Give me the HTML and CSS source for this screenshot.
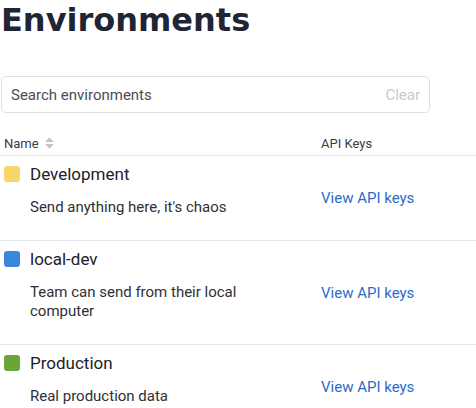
FILE: index.html
```html
<!DOCTYPE html>
<html>
<head>
<meta charset="utf-8">
<link rel="stylesheet" href="styles.css">
</head>
<body>
<div class="page">
  <h1 class="title">Environments</h1>
  <div class="search">
    <span class="search-placeholder">Search environments</span>
    <span class="search-clear">Clear</span>
  </div>
  <div class="table">
    <div class="thead">
      <div class="col-name">Name
        <svg class="sort" width="11" height="12" viewBox="0 0 11 12"><path d="M5.5 0.5 L10 5 L1 5 Z" fill="#bcc3cd"/><path d="M1 7 L10 7 L5.5 11.5 Z" fill="#bcc3cd"/></svg>
      </div>
      <div class="col-keys">API Keys</div>
    </div>
    <div class="row">
      <div class="col-name">
        <div class="env-name"><span class="swatch swatch-yellow"></span>Development</div>
        <div class="env-desc">Send anything here, it's chaos</div>
      </div>
      <div class="col-keys"><a class="link">View API keys</a></div>
    </div>
    <div class="row">
      <div class="col-name">
        <div class="env-name"><span class="swatch swatch-blue"></span>local-dev</div>
        <div class="env-desc">Team can send from their local computer</div>
      </div>
      <div class="col-keys"><a class="link">View API keys</a></div>
    </div>
    <div class="row">
      <div class="col-name">
        <div class="env-name"><span class="swatch swatch-green"></span>Production</div>
        <div class="env-desc">Real production data</div>
      </div>
      <div class="col-keys"><a class="link">View API keys</a></div>
    </div>
  </div>
</div>
</body>
</html>
```
FILE: styles.css
```css
html, body {
  margin: 0;
  padding: 0;
  background: #ffffff;
  overflow: hidden;
}
body {
  font-family: Roboto, "Liberation Sans", sans-serif;
  color: #25272c;
}
.page {
  width: 476px;
}
.title {
  margin: 0;
  padding: 0 0 0 1px;
  font-family: "DejaVu Sans", sans-serif;
  font-weight: 700;
  font-size: 32px;
  line-height: 40px;
  height: 40px;
  color: #1f2534;
}
.search {
  margin: 36px 0 0 1px;
  width: 429px;
  height: 37px;
  box-sizing: border-box;
  border: 1px solid #dde1e7;
  border-radius: 5px;
  display: flex;
  align-items: center;
  justify-content: space-between;
  padding: 0 9px 0 9px;
  font-size: 15px;
}
.search-placeholder {
  color: #4a4d55;
}
.search-clear {
  color: #c7cbd3;
}
.thead {
  display: flex;
  margin-top: 18px;
  height: 24px;
  align-items: center;
  font-size: 13px;
  color: #3a3d44;
  border-bottom: 1px solid #e2e6eb;
}
.thead .col-name {
  display: flex;
  align-items: center;
  gap: 5px;
}
.col-name {
  width: 321px;
  padding-left: 4px;
  box-sizing: border-box;
  flex: none;
}
.col-keys {
  flex: 1;
}
.row {
  display: flex;
  align-items: center;
  border-bottom: 1px solid #e2e6eb;
}
.row .col-name {
  padding-top: 6px;
  padding-bottom: 22px;
}
.env-name {
  display: flex;
  align-items: center;
  gap: 10px;
  font-size: 17px;
  line-height: 24px;
  color: #1d2029;
}
.swatch {
  width: 16px;
  height: 16px;
  border-radius: 3px;
  flex: none;
}
.swatch-yellow { background: #f9d46c; }
.swatch-blue { background: #3a87db; }
.swatch-green { background: #68a63a; }
.env-desc {
  margin-top: 12px;
  padding-left: 26px;
  font-size: 15px;
  line-height: 19.5px;
  color: #2e3036;
  width: 240px;
}
.link {
  font-size: 15px;
  color: #2b6cc9;
  text-decoration: none;
}
```
